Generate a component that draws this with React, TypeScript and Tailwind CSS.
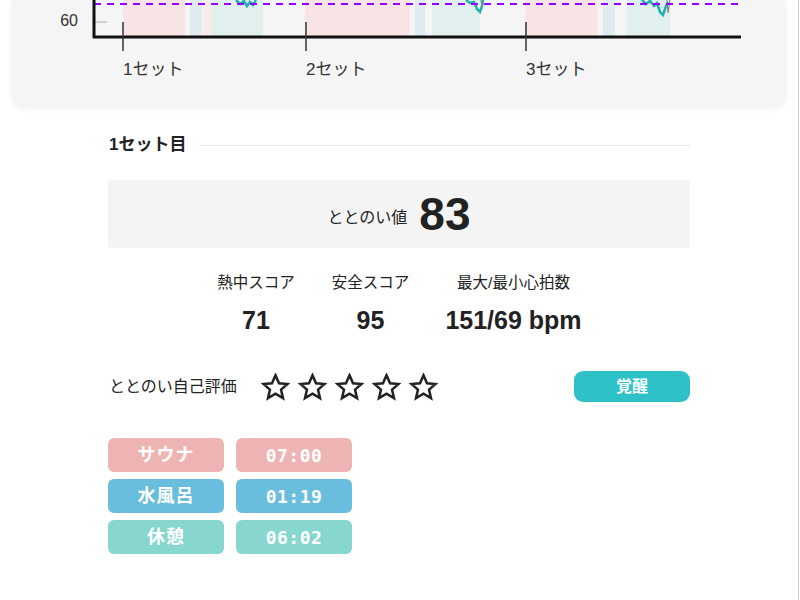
import React from 'react';

const jp = "font-['Liberation_Sans','Noto_Sans_CJK_JP',sans-serif]";
const mono = "font-['DejaVu_Sans_Mono','Liberation_Mono',monospace]";

// bands: [x1, x2, fill] in page coords
const bands: [number, number, string][] = [
    [123, 185, '#f8e4e4'],
    [190, 202, '#dfebf1'],
    [203, 212, '#f7ecec'],
    [212, 263, '#e1f0ef'],
    [305, 410, '#f8e4e4'],
    [415, 425, '#dfebf1'],
    [432, 480, '#e1f0ef'],
    [525, 597, '#f8e4e4'],
    [603, 615, '#dfebf1'],
    [627, 670, '#e1f0ef'],
];

const sets = [
    { x: 123, label: '1セット' },
    { x: 306, label: '2セット' },
    { x: 526, label: '3セット' },
];

const phases = [
    { name: 'サウナ', time: '07:00', bg: 'bg-[#eeb4b4]' },
    { name: '水風呂', time: '01:19', bg: 'bg-[#68bedc]' },
    { name: '休憩', time: '06:02', bg: 'bg-[#87d7cf]' },
];

const Star: React.FC = () => (
    <svg width="29" height="28" viewBox="0 0 24 23" fill="none">
        <path
            d="M12 1.8l2.9 6.6 7.1.6-5.4 4.7 1.6 7-6.2-3.7-6.2 3.7 1.6-7L2 9l7.1-.6z"
            stroke="#222"
            strokeWidth="2.1"
            strokeLinejoin="miter"
        />
    </svg>
);

const Chart: React.FC = () => {
    const ox = 12; // card left offset
    return (
        <svg width="775" height="107" viewBox={`${ox} 0 775 107`} className="block">
            {/* phase bands */}
            {bands.map(([a, b, c], i) => (
                <rect key={i} x={a} y={0} width={b - a} height={36} fill={c} />
            ))}

            {/* heart rate */}
            <polyline
                points="236,0 240,4 244,1 247,6 250,2 253,5 256,0"
                fill="none"
                stroke="#21aeb0"
                strokeWidth="2.5"
            />
            <polyline
                points="466,0 470,3 474,2 477,9 480,12 482,6 483,0"
                fill="none"
                stroke="#21aeb0"
                strokeWidth="2.5"
            />
            <polyline points="481,0 482,8" fill="none" stroke="#888" strokeWidth="1.2" />
            <polyline
                points="642,0 646,4 650,1 654,6 657,3 660,12 663,15 666,6 668,2"
                fill="none"
                stroke="#21aeb0"
                strokeWidth="2.5"
            />
            <polyline points="667,0 668,13 670,0" fill="none" stroke="#888" strokeWidth="1.2" />

            {/* threshold */}
            <line x1={94} y1={4} x2={740} y2={4} stroke="#9500ff" strokeWidth="2" strokeDasharray="7 6" />

            {/* y label */}
            <line x1={93} y1={22} x2={107} y2={22} stroke="#aaa" strokeWidth="1" />
            <text x={78} y={26} textAnchor="end" fontSize="16" fill="#333" fontFamily="Liberation Sans, sans-serif">
                60
            </text>

            {/* axes */}
            <line x1={94} y1={0} x2={94} y2={38} stroke="#111" strokeWidth="3" />
            <line x1={93} y1={37} x2={741} y2={37} stroke="#111" strokeWidth="3" />

            {/* set ticks */}
            {sets.map(s => (
                <g key={s.x}>
                    <line x1={s.x} y1={22} x2={s.x} y2={51} stroke="#333" strokeWidth="1.5" />
                    <text
                        x={s.x}
                        y={75}
                        fontSize="17"
                        fill="#333"
                        fontFamily="Liberation Sans, Noto Sans CJK JP, sans-serif"
                    >
                        {s.label}
                    </text>
                </g>
            ))}
        </svg>
    );
};

export default function App() {
    return (
        <div className={`w-[799px] min-h-[600px] bg-white border-r border-[#cfcfcf] text-[#222] ${jp}`}>
            {/* Chart card (scrolled) */}
            <div className="mx-3 h-[107px] rounded-b-xl bg-[#f5f5f5] shadow-[0_2px_6px_rgba(0,0,0,0.06)] overflow-hidden">
                <Chart />
            </div>

            <div className="w-[582px] mx-auto">
                {/* Section header */}
                <div className="mt-[26px] flex items-center gap-[13px]">
                    <span className="ml-px text-[17px] leading-6 font-bold">1セット目</span>
                    <div className="flex-1 h-px bg-[#e6e6e6]" />
                </div>

                {/* Totonoi score */}
                <div className="mt-[23px] h-[68px] rounded bg-[#f4f4f4] flex items-center justify-center gap-3">
                    <span className="text-[16px] mt-2">ととのい値</span>
                    <span className="text-[46px] leading-none font-bold">83</span>
                </div>

                {/* Stats */}
                <div className="mt-6 flex justify-center gap-9">
                    <div className="flex flex-col items-center w-[78px]">
                        <span className="text-[15.5px] leading-[22px] whitespace-nowrap">熱中スコア</span>
                        <span className="mt-[10px] text-[25px] leading-8 font-bold">71</span>
                    </div>
                    <div className="flex flex-col items-center w-[79px]">
                        <span className="text-[15.5px] leading-[22px] whitespace-nowrap">安全スコア</span>
                        <span className="mt-[10px] text-[25px] leading-8 font-bold">95</span>
                    </div>
                    <div className="flex flex-col items-center w-[135px]">
                        <span className="text-[15.5px] leading-[22px] whitespace-nowrap">最大/最小心拍数</span>
                        <span className="mt-[10px] text-[25px] leading-8 font-bold whitespace-nowrap">151/69 bpm</span>
                    </div>
                </div>

                {/* Self evaluation */}
                <div className="mt-[35px] flex items-center">
                    <span className="text-[16px] ml-px">ととのい自己評価</span>
                    <div className="ml-[24px] flex items-center gap-[8px]">
                        <Star />
                        <Star />
                        <Star />
                        <Star />
                        <Star />
                    </div>
                    <button className="ml-auto w-[116px] h-[31px] rounded-[9px] bg-[#2ec2c8] text-white text-[16px] font-bold">
                        覚醒
                    </button>
                </div>

                {/* Phases */}
                <div className="mt-9 grid grid-cols-[116px_116px] gap-x-3 gap-y-[7px]">
                    {phases.map(p => (
                        <React.Fragment key={p.name}>
                            <div
                                className={`${p.bg} h-[34px] rounded-md flex items-center justify-center text-white text-[18px] font-bold tracking-[1px]`}
                            >
                                {p.name}
                            </div>
                            <div
                                className={`${p.bg} h-[34px] rounded-md flex items-center justify-center text-white text-[18px] font-bold tracking-[0.5px] ${mono}`}
                            >
                                {p.time}
                            </div>
                        </React.Fragment>
                    ))}
                </div>
            </div>
        </div>
    );
}
